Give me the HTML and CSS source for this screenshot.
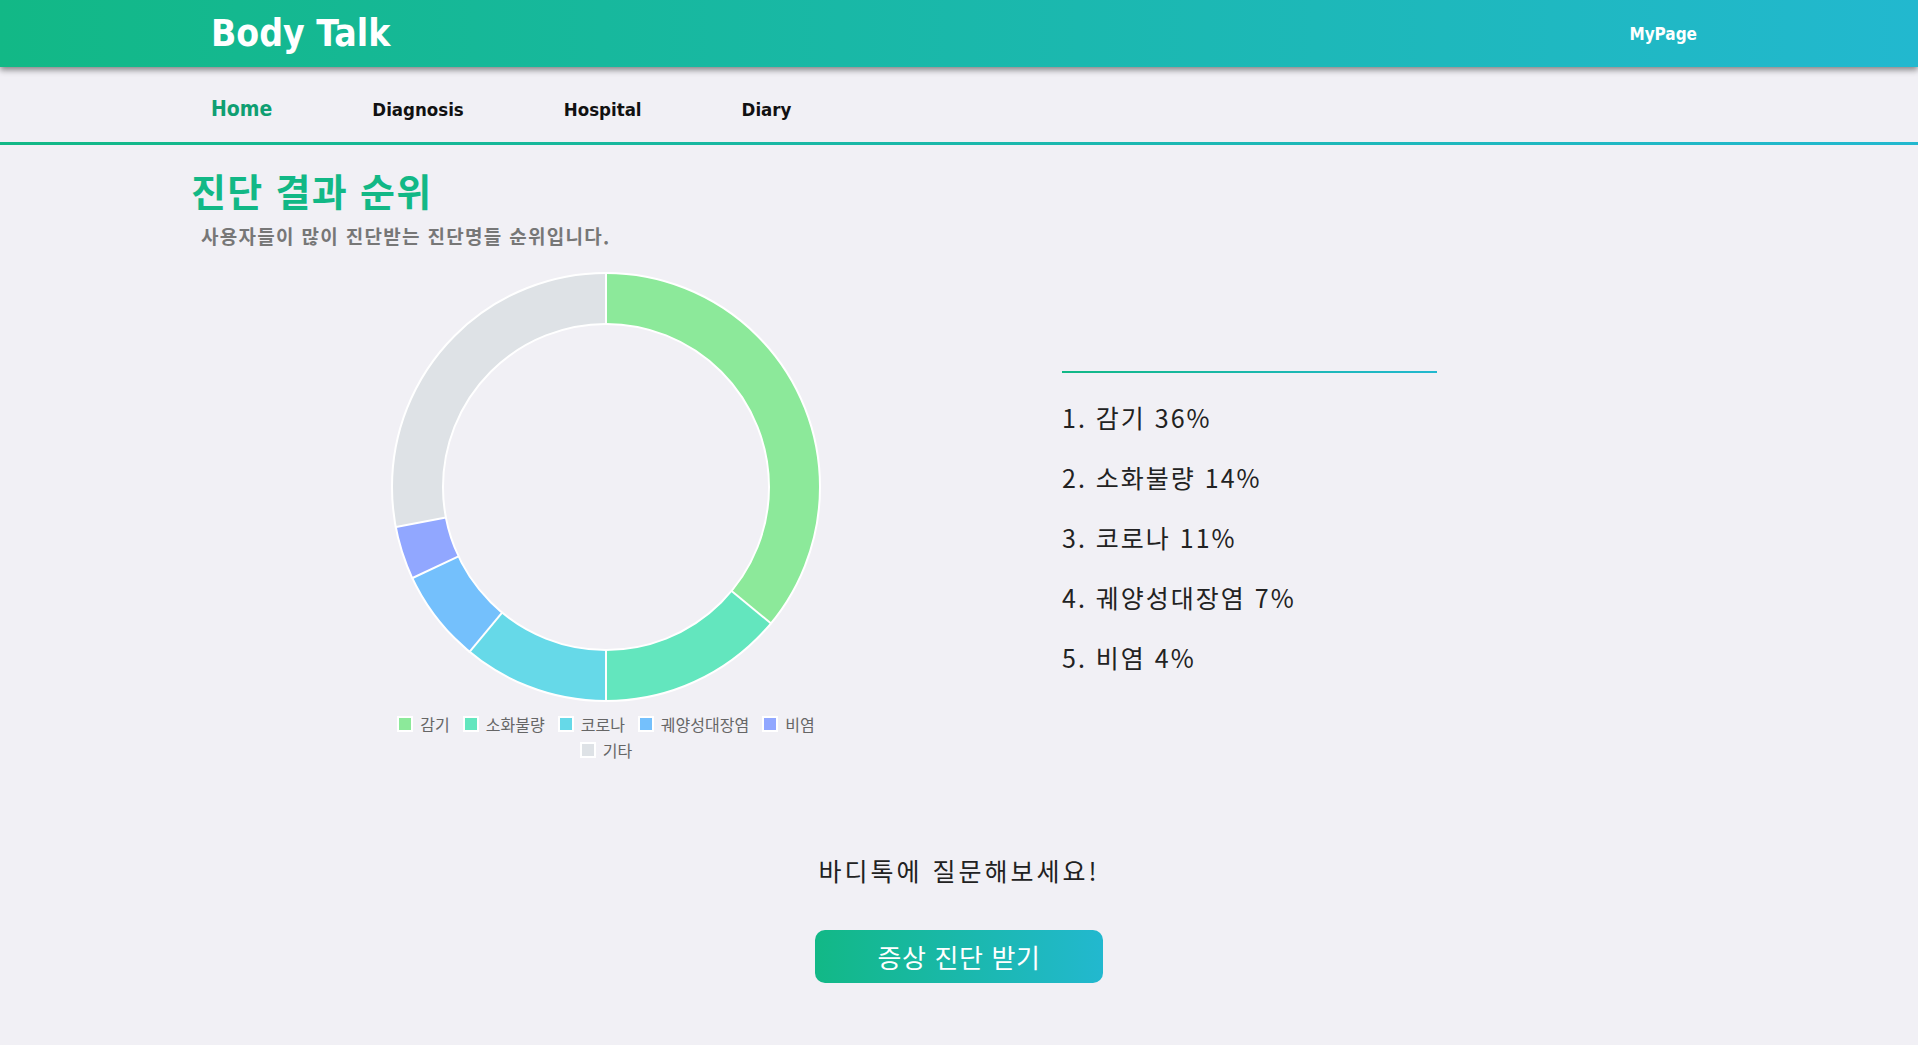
FILE: index.html
```html
<!DOCTYPE html>
<html lang="ko">
<head>
<meta charset="utf-8">
<title>Body Talk</title>
<link rel="stylesheet" href="styles.css">
</head>
<body>
<header class="topbar">
  <div class="topbar-inner">
    <div class="logo">Body Talk</div>
    <a class="mypage">MyPage</a>
  </div>
</header>
<nav class="menu">
  <div class="menu-inner">
    <a class="menu-item active">Home</a>
    <a class="menu-item">Diagnosis</a>
    <a class="menu-item">Hospital</a>
    <a class="menu-item">Diary</a>
  </div>
</nav>
<div class="menu-line"></div>
<main class="content">
  <h1 class="title">진단 결과 순위</h1>
  <p class="subtitle">사용자들이 많이 진단받는 진단명들 순위입니다.</p>
  <section class="stats">
    <div class="chart">
      <svg class="donut" width="434" height="434" viewBox="-217 -217 434 434">
        <g transform="rotate(-90)" fill="none" stroke-width="51">
          <circle r="188.5" pathLength="100" stroke="#8ce99a" stroke-dasharray="36 64" stroke-dashoffset="0"/>
          <circle r="188.5" pathLength="100" stroke="#63e6be" stroke-dasharray="14 86" stroke-dashoffset="-36"/>
          <circle r="188.5" pathLength="100" stroke="#66d9e8" stroke-dasharray="11 89" stroke-dashoffset="-50"/>
          <circle r="188.5" pathLength="100" stroke="#74c0fc" stroke-dasharray="7 93" stroke-dashoffset="-61"/>
          <circle r="188.5" pathLength="100" stroke="#91a7ff" stroke-dasharray="4 96" stroke-dashoffset="-68"/>
          <circle r="188.5" pathLength="100" stroke="#dee2e6" stroke-dasharray="28 72" stroke-dashoffset="-72"/>
        </g>
        <g stroke="#ffffff" stroke-width="2" fill="none">
          <circle r="214"/>
          <circle r="163"/>
          <line x1="0" y1="-163" x2="0" y2="-215"/>
          <line x1="125.6" y1="103.9" x2="165.7" y2="137.1"/>
          <line x1="0" y1="163" x2="0" y2="215"/>
          <line x1="-103.9" y1="125.6" x2="-137.1" y2="165.7"/>
          <line x1="-147.5" y1="69.4" x2="-194.5" y2="91.5"/>
          <line x1="-160.1" y1="30.5" x2="-211.2" y2="40.3"/>
        </g>
      </svg>
      <ul class="legend">
        <li class="legend-item"><span class="swatch sw-green"></span>감기</li>
        <li class="legend-item"><span class="swatch sw-teal"></span>소화불량</li>
        <li class="legend-item"><span class="swatch sw-cyan"></span>코로나</li>
        <li class="legend-item"><span class="swatch sw-blue"></span>궤양성대장염</li>
        <li class="legend-item"><span class="swatch sw-indigo"></span>비염</li>
        <li class="legend-item"><span class="swatch sw-gray"></span>기타</li>
      </ul>
    </div>
    <div class="ranking">
      <div class="rank-line"></div>
      <ol class="rank-list">
        <li>1. 감기 36%</li>
        <li>2. 소화불량 14%</li>
        <li>3. 코로나 11%</li>
        <li>4. 궤양성대장염 7%</li>
        <li>5. 비염 4%</li>
      </ol>
    </div>
  </section>
  <section class="cta">
    <p class="cta-text">바디톡에 질문해보세요!</p>
    <button class="cta-btn">증상 진단 받기</button>
  </section>
</main>
</body>
</html>
```
FILE: styles.css
```css
* { box-sizing: border-box; }
html, body { margin: 0; padding: 0; }
body {
  background: #f1f0f5;
  font-family: "Noto Sans CJK KR", "Noto Sans", sans-serif;
  color: #222;
}
.topbar {
  position: relative;
  z-index: 2;
  height: 67px;
  background: linear-gradient(90deg, #12b886 0%, #22b8cf 100%);
  box-shadow: 0 3px 6px rgba(0,0,0,0.45);
}
.topbar-inner {
  width: 1500px;
  height: 67px;
  margin: 0 auto;
  padding: 0 12px 0 2px;
  display: flex;
  align-items: center;
  justify-content: space-between;
}
.logo {
  font-family: "DejaVu Sans Condensed", "DejaVu Sans", sans-serif;
  font-weight: 700;
  font-size: 37px;
  color: #fff;
  line-height: 1;
}
.mypage {
  font-family: "DejaVu Sans Condensed", "DejaVu Sans", sans-serif;
  font-weight: 700;
  font-size: 17px;
  color: #fff;
}
.menu {
  height: 75px;
  padding-top: 30px;
}
.menu-inner {
  width: 1500px;
  height: 25px;
  margin: 0 auto;
  padding-left: 2px;
  display: flex;
  align-items: baseline;
  gap: 100px;
}
.menu-item {
  font-family: "DejaVu Sans Condensed", "DejaVu Sans", sans-serif;
  font-weight: 700;
  font-size: 18.5px;
  line-height: 25px;
  color: #111;
}
.menu-item.active {
  color: #0f9f72;
  font-size: 21px;
}
.menu-line {
  height: 3px;
  background: linear-gradient(90deg, #12b886 0%, #22b8cf 100%);
}
.content {
  width: 1536px;
  margin: 0 auto;
}
.title {
  margin: 23px 0 0;
  font-size: 38px;
  line-height: 44px;
  letter-spacing: 1.3px;
  font-weight: 700;
  color: #12b886;
}
.subtitle {
  margin: 12px 0 0;
  padding-left: 10px;
  font-size: 19px;
  line-height: 24px;
  letter-spacing: 1.3px;
  font-weight: 700;
  color: #777;
}
.stats {
  display: flex;
  margin-top: 22px;
}
.chart {
  width: 434px;
  margin-left: 198px;
}
.donut { display: block; }
.legend {
  list-style: none;
  margin: 10px 0 0;
  padding: 0;
  display: flex;
  flex-wrap: wrap;
  justify-content: center;
  column-gap: 13px;
  row-gap: 6px;
}
.legend-item {
  display: flex;
  align-items: center;
  gap: 7px;
  font-size: 16px;
  line-height: 20px;
  color: #666;
}
.swatch {
  width: 16px;
  height: 16px;
  border: 2px solid #fff;
}
.sw-green { background: #8ce99a; }
.sw-teal { background: #63e6be; }
.sw-cyan { background: #66d9e8; }
.sw-blue { background: #74c0fc; }
.sw-indigo { background: #91a7ff; }
.sw-gray { background: #dee2e6; }
.ranking {
  margin-left: 239px;
  padding-top: 101px;
  width: 375px;
}
.rank-line {
  height: 2px;
  background: linear-gradient(90deg, #12b886 0%, #22b8cf 100%);
}
.rank-list {
  list-style: none;
  margin: 14px 0 0;
  padding: 0;
}
.rank-list li {
  font-size: 25px;
  line-height: 60px;
  letter-spacing: 2px;
  color: #222;
}
.cta {
  display: flex;
  flex-direction: column;
  align-items: center;
  margin-top: 94px;
}
.cta-text {
  margin: 0;
  font-size: 25px;
  line-height: 32px;
  letter-spacing: 3px;
  color: #222;
}
.cta-btn {
  margin-top: 44px;
  width: 288px;
  height: 53px;
  border: none;
  border-radius: 10px;
  background: linear-gradient(90deg, #12b886 0%, #22b8cf 100%);
  color: #fff;
  font-family: "Noto Sans CJK KR", "Noto Sans", sans-serif;
  font-size: 26px;
  letter-spacing: 0.6px;
}
```
